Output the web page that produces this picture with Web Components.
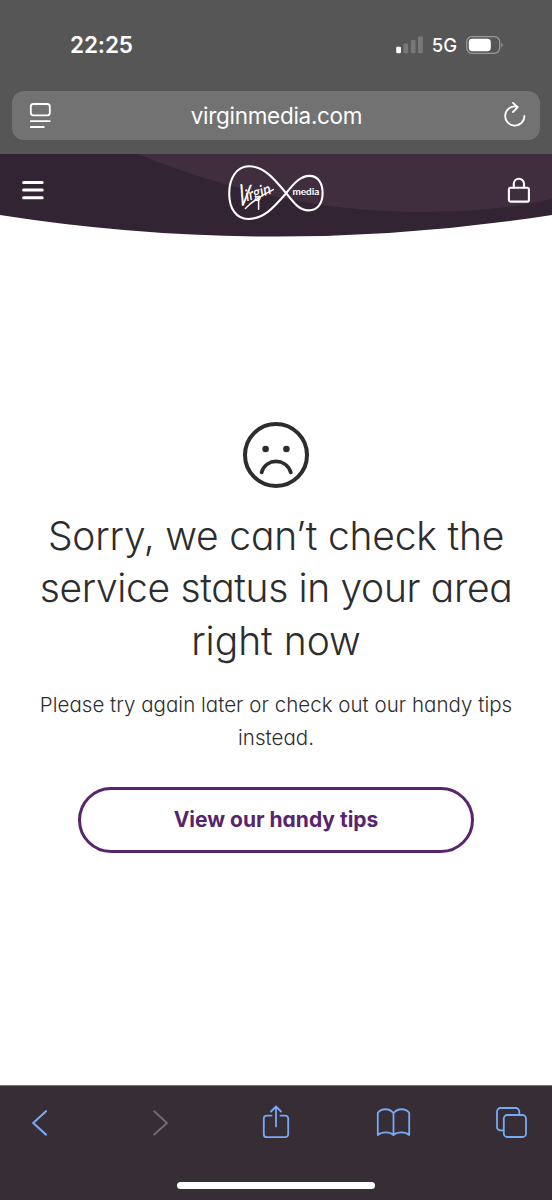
<!DOCTYPE html>
<html lang="en">
<head>
  <meta charset="UTF-8">
  <meta name="viewport" content="width=device-width, initial-scale=1.0">
  <title>Virgin Media</title>
  <style>
    body {
      margin: 0;
      background: #fff;
      font-family: Inter, "Liberation Sans", sans-serif;
    }
  </style>
</head>
<body>
  <phone-screen>
    <status-bar slot="top" time="22:25" network="5G"></status-bar>
    <address-bar slot="top">virginmedia.com</address-bar>
    <site-header></site-header>
    <service-message>
      <span slot="title" style="letter-spacing: -0.2px">Sorry, we can’t check the</span>
      <span slot="title" style="letter-spacing: -0.35px">service status in your area</span>
      <span slot="title">right now</span>
      <span slot="text">Please try again later or check out our handy tips</span>
      <span slot="text">instead.</span>
      <outline-button slot="action">View our handy tips</outline-button>
    </service-message>
    <browser-toolbar slot="bottom"></browser-toolbar>
  </phone-screen>

  <script>
    class PhoneScreen extends HTMLElement {
      constructor() {
        super();
        this.attachShadow({ mode: 'open' });
        this.shadowRoot.innerHTML = `
          <style>
            :host {
              display: flex;
              flex-direction: column;
              width: 552px;
              height: 1200px;
              overflow: hidden;
            }

            .top {
              height: 154px;
              background: #565656;
              flex: none;
            }

            main {
              flex: 1;
              display: flex;
              flex-direction: column;
            }
          </style>
          <div class="top"><slot name="top"></slot></div>
          <main><slot></slot></main>
          <slot name="bottom"></slot>
        `;
      }
    }

    class StatusBar extends HTMLElement {
      constructor() {
        super();
        this.attachShadow({ mode: 'open' });
      }

      connectedCallback() {
        this.shadowRoot.innerHTML = `
          <style>
            :host {
              display: flex;
              justify-content: space-between;
              align-items: center;
              box-sizing: border-box;
              height: 91px;
              padding: 0 48px 2px 70px;
              color: #fff;
            }

            .time {
              font-size: 22.5px;
              font-weight: 600;
              letter-spacing: -0.1px;
            }

            .status {
              display: flex;
              align-items: center;
            }

            .network {
              font-size: 18.5px;
              font-weight: 450;
              margin: 1px 9px 0 8px;
            }

            svg {
              display: block;
            }
          </style>
          <span class="time">${this.getAttribute('time')}</span>
          <div class="status">
            <svg width="28" height="18" viewBox="0 0 28 18">
              <rect x="0.2" y="10.8" width="4.8" height="6.4" rx="1.2" fill="#fff"/>
              <g fill="#787878">
                <rect x="7.4" y="7.6" width="4.8" height="9.6" rx="1.2"/>
                <rect x="14.8" y="4" width="4.8" height="13.2" rx="1.2"/>
                <rect x="22" y="0.4" width="4.8" height="16.8" rx="1.2"/>
              </g>
            </svg>
            <span class="network">${this.getAttribute('network')}</span>
            <svg width="38" height="18" viewBox="0 0 38 18">
              <rect x="0.7" y="0.7" width="33" height="16.6" rx="5.2" fill="none" stroke="#989898" stroke-width="1.3"/>
              <rect x="2.8" y="2.8" width="22" height="12.4" rx="3.4" fill="#fff"/>
              <path d="M35.4 6.2q2.6 2.8 0 5.6z" fill="#989898"/>
            </svg>
          </div>
        `;
      }
    }

    class AddressBar extends HTMLElement {
      constructor() {
        super();
        this.attachShadow({ mode: 'open' });
        this.shadowRoot.innerHTML = `
          <style>
            :host {
              display: grid;
              grid-template-columns: 24px 1fr 24px;
              align-items: center;
              box-sizing: border-box;
              height: 49px;
              margin: 0 12px;
              padding: 0 14px 0 15px;
              border-radius: 12px;
              background: #727272;
              color: #fff;
              font-size: 22.5px;
              text-align: center;
              letter-spacing: -0.3px;
            }

            svg {
              display: block;
              fill: none;
              stroke: #fff;
              stroke-width: 1.8;
              stroke-linecap: round;
              stroke-linejoin: round;
            }
          </style>
          <svg width="24" height="28" viewBox="0 0 24 28">
            <rect x="3.8" y="2" width="19" height="11.4" rx="2.6"/>
            <path d="M3.8 19.2h19M3.8 25h13"/>
          </svg>
          <span><slot></slot></span>
          <svg width="24" height="28" viewBox="0 0 24 28">
            <path d="M14.6 4.6A9.6 9.6 0 1 0 22.4 14M11 0.9l4.8 4.2-4.8 4.9"/>
          </svg>
        `;
      }
    }

    class VirginLogo extends HTMLElement {
      constructor() {
        super();
        this.attachShadow({ mode: 'open' });
        this.shadowRoot.innerHTML = `
          <style>
            :host {
              display: block;
              padding-top: 1px;
            }

            svg {
              display: block;
              font-family: Lato, sans-serif;
            }
          </style>
          <svg width="96" height="56" viewBox="0 0 96 56">
            <path d="M58.2 28.2C45.8 13.4 36 1.3 21 1.3 8 1.3 1.2 14.2 1.2 28.4 1.2 43.6 8.4 54 20.2 54 35.5 54 45.4 42.8 58.2 28.2 66 18.2 72.6 10.9 81.3 10.9c9 0 13.3 7.7 13.3 17.1 0 10-4.6 17.4-13.8 17.4C71.6 45.4 66 38.3 58.2 28.2z" fill="none" stroke="#fff" stroke-width="2.1"/>
            <g fill="#fff">
              <text transform="translate(9 40.5) rotate(3) skewX(-6)" font-size="30" font-weight="500" textLength="11.5" lengthAdjust="spacingAndGlyphs">V</text>
              <text transform="translate(18.6 36.6) rotate(-18) skewX(-8)" font-size="16" font-weight="600" textLength="26" lengthAdjust="spacingAndGlyphs">irgin</text>
            </g>
            <path d="M17.4 43.4C23 37.6 32 31 45.3 24.6M30.6 34v10.2" fill="none" stroke="#fff" stroke-width="1.5" stroke-linecap="round"/>
            <text x="64.4" y="30.200" fill="#fff" font-size="10" font-weight="700" textLength="27" lengthAdjust="spacingAndGlyphs">media</text>
          </svg>
        `;
      }
    }

    class SiteHeader extends HTMLElement {
      constructor() {
        super();
        this.attachShadow({ mode: 'open' });
        this.shadowRoot.innerHTML = `
          <style>
            :host {
              display: grid;
              height: 83px;
            }

            .wave,
            nav {
              grid-area: 1 / 1;
            }

            nav {
              display: grid;
              grid-template-columns: 1fr auto 1fr;
              align-items: start;
              padding: 10px 21px 0;
            }

            svg {
              display: block;
            }

            .icon {
              margin-top: 13px;
              fill: none;
              stroke: #fff;
              stroke-linecap: round;
              stroke-linejoin: round;
            }

            .lock {
              justify-self: end;
            }
          </style>
          <svg class="wave" width="552" height="83" viewBox="0 0 552 83">
            <clipPath id="edge"><path d="M0 0H552V61A1784 1784 0 0 1 0 61z"/></clipPath>
            <g clip-path="url(#edge)">
              <path d="M0 0H552V83H0z" fill="#322432"/>
              <path d="M138 0C232 39 330 58 415 58 465 58 510 55 552 45V0z" fill="#402d3e"/>
            </g>
          </svg>
          <nav>
            <svg class="icon" width="24" height="26" viewBox="0 0 24 26" stroke-width="3">
              <path d="M2.6 5.4h18.6M2.6 13h18.6M2.6 20.7h18.6"/>
            </svg>
            <virgin-logo></virgin-logo>
            <svg class="icon lock" width="24" height="28" viewBox="0 0 24 28" stroke-width="2.1">
              <rect x="1.9" y="10.8" width="20" height="13.8" rx="1.6"/>
              <path d="M6.8 10.6V6.8a5.1 5.1 0 0 1 10.2 0v3.8"/>
            </svg>
          </nav>
        `;
      }
    }

    class ServiceMessage extends HTMLElement {
      constructor() {
        super();
        this.attachShadow({ mode: 'open' });
        this.shadowRoot.innerHTML = `
          <style>
            :host {
              display: flex;
              flex-direction: column;
              align-items: center;
              padding-top: 184px;
              text-align: center;
              white-space: nowrap;
              color: #2d2d2d;
              font-feature-settings: "cv11";
            }

            svg {
              display: block;
            }

            h1 {
              margin: 21px 0 0;
              font-size: 39px;
              line-height: 52.3px;
              font-weight: 300;
            }

            p {
              margin: 21px 0 0;
              font-size: 20.5px;
              line-height: 33px;
              font-weight: 300;
              letter-spacing: 0.03px;
            }

            ::slotted(span) {
              display: block;
            }
          </style>
          <svg width="68" height="68" viewBox="0 0 68 68">
            <circle cx="34" cy="34" r="31" fill="none" stroke="#2d2d2d" stroke-width="4"/>
            <circle cx="23.6" cy="28" r="3.3" fill="#2d2d2d"/>
            <circle cx="44.4" cy="28" r="3.3" fill="#2d2d2d"/>
            <path d="M19.6 51.4C24 36.8 44 36.8 48.8 51.4" fill="none" stroke="#2d2d2d" stroke-width="3.8" stroke-linecap="round"/>
          </svg>
          <h1><slot name="title"></slot></h1>
          <p><slot name="text"></slot></p>
          <slot name="action"></slot>
        `;
      }
    }

    class OutlineButton extends HTMLElement {
      constructor() {
        super();
        this.attachShadow({ mode: 'open' });
        this.shadowRoot.innerHTML = `
          <style>
            :host {
              display: block;
              margin-top: 33px;
            }

            button {
              display: block;
              width: 396px;
              height: 66px;
              padding: 0;
              border: 3px solid #58246e;
              border-radius: 33px;
              background: #fff;
              color: #58246e;
              font: inherit;
              font-feature-settings: inherit;
              font-size: 21px;
              font-weight: 700;
            }
          </style>
          <button type="button"><slot></slot></button>
        `;
      }
    }

    class BrowserToolbar extends HTMLElement {
      constructor() {
        super();
        this.attachShadow({ mode: 'open' });
        this.shadowRoot.innerHTML = `
          <style>
            :host {
              display: flex;
              flex-direction: column;
              align-items: center;
              justify-content: space-between;
              box-sizing: border-box;
              height: 115px;
              padding-bottom: 11px;
              border-top: 1px solid #777279;
              background: #362d35;
              flex: none;
            }

            nav {
              display: flex;
              justify-content: space-between;
              box-sizing: border-box;
              width: 100%;
              padding: 17px 23px 0 22px;
            }

            svg {
              display: block;
              fill: none;
              stroke: #78a9f7;
              stroke-width: 1.8;
              stroke-linecap: round;
              stroke-linejoin: round;
            }

            .disabled {
              stroke: #716a71;
            }

            .indicator {
              width: 198px;
              height: 7px;
              border-radius: 4px;
              background: #fff;
            }
          </style>
          <nav>
            <svg width="36" height="38" viewBox="0 0 36 38">
              <path d="M24 8.2L11.2 20l12.8 11.6" stroke-width="2.1"/>
            </svg>
            <svg class="disabled" width="36" height="38" viewBox="0 0 36 38">
              <path d="M14.2 8.2L27 20 14.2 31.6" stroke-width="2"/>
            </svg>
            <svg width="36" height="38" viewBox="0 0 36 38">
              <path d="M13.5 12.6H8.8a3 3 0 0 0-3 3v15.6a3 3 0 0 0 3 3h18.4a3 3 0 0 0 3-3V15.6a3 3 0 0 0-3-3H22.5M18 23.5V3.5M13 8.5l5-5 5 5"/>
            </svg>
            <svg width="36" height="38" viewBox="0 0 36 38">
              <path d="M18.500 10.2C14.500 5 6.500 5 2.800 9.800V32c4-3.400 12-3.400 15.700 0 3.700-3.400 11.700-3.400 15.700 0V9.800C30.500 5 22.500 5 18.500 10.200zM18.500 10.200V32"/>
            </svg>
            <svg width="36" height="38" viewBox="0 0 36 38">
              <path d="M10.5 27.4H7.5a3.5 3.5 0 0 1-3.5-3.5V8.5A3.5 3.5 0 0 1 7.5 5h15.3a3.5 3.5 0 0 1 3.5 3.5v3"/>
              <rect x="10.8" y="12" width="22.2" height="22" rx="3.5"/>
            </svg>
          </nav>
          <div class="indicator"></div>
        `;
      }
    }

    customElements.define('phone-screen', PhoneScreen);
    customElements.define('status-bar', StatusBar);
    customElements.define('address-bar', AddressBar);
    customElements.define('virgin-logo', VirginLogo);
    customElements.define('site-header', SiteHeader);
    customElements.define('service-message', ServiceMessage);
    customElements.define('outline-button', OutlineButton);
    customElements.define('browser-toolbar', BrowserToolbar);
  </script>
</body>
</html>
